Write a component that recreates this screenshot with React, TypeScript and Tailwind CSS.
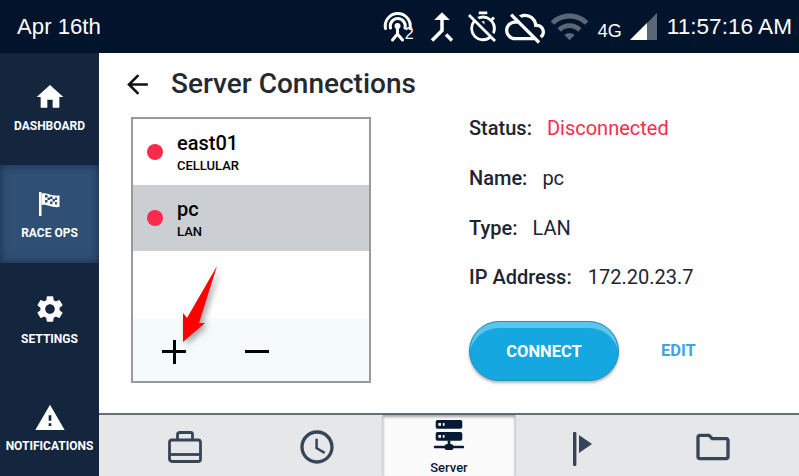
import React from "react";
import { MdHome, MdSettings, MdWarning, MdArrowBack, MdCallMerge, MdOutlineTimerOff, MdOutlineCloudOff, MdWifi, MdOutlineFolder, MdAccessTime } from "react-icons/md";

function Antenna() {
  return (
    <svg width="32" height="32" viewBox="0 0 32 32" fill="none" stroke="#fff" strokeWidth="3" strokeLinecap="round">
      <path d="M3.5 17.5 A12.5 12.5 0 1 1 28 17.5" />
      <path d="M8.5 17 A7.5 7.5 0 1 1 23 17" />
      <circle cx="15.5" cy="15" r="3" fill="#fff" stroke="none" />
      <path d="M15.5 16v7M15.5 23l-5 6M15.5 23l5 6" />
    </svg>
  );
}

function Signal() {
  return (
    <svg width="28" height="28" viewBox="0 0 28 28">
      <path d="M0 28 L27 1 V28 Z" fill="#5a6777" />
      <path d="M0 28 L17 11 V28 Z" fill="#fff" />
    </svg>
  );
}

function RaceFlag() {
  return (
    <svg width="21" height="24" viewBox="0 0 21 24">
      <rect x="0" y="0" width="2.5" height="24" fill="#fff" />
      <path d="M2.5 1.5 C8 0 12 4.5 20.5 3.5 V15 C12 16 8 11.5 2.5 13 Z" fill="#fff" />
      <g fill="#2f4f75">
        <rect x="6" y="3" width="2.5" height="2.5" />
        <rect x="11" y="4.5" width="2.5" height="2.5" />
        <rect x="8.5" y="5.5" width="2.5" height="2.5" />
        <rect x="13.5" y="7" width="2.5" height="2.5" />
        <rect x="6" y="8" width="2.5" height="2.5" />
        <rect x="11" y="9.5" width="2.5" height="2.5" />
        <rect x="16" y="5.5" width="2" height="2.5" />
        <rect x="16" y="10" width="2" height="2.5" />
      </g>
    </svg>
  );
}

function Briefcase() {
  return (
    <svg width="36" height="34" viewBox="0 0 36 34" fill="none" stroke="#374559" strokeWidth="2.8" strokeLinejoin="round">
      <rect x="2.5" y="10" width="31" height="21.5" rx="2.5" />
      <path d="M10.5 10V4.5A2 2 0 0 1 12.5 2.5H23.5A2 2 0 0 1 25.5 4.5V10" />
      <path d="M2.5 24.5H33.5" />
    </svg>
  );
}

function ServerIcon() {
  return (
    <svg width="36" height="35" viewBox="0 0 36 35">
      <rect x="3" y="0" width="30" height="10" rx="2" fill="#071a33" />
      <rect x="3" y="13.5" width="30" height="10" rx="2" fill="#071a33" />
      <rect x="6" y="3.5" width="3" height="3" fill="#fff" />
      <rect x="11" y="3.5" width="2" height="3" fill="#fff" />
      <rect x="6" y="17" width="3" height="3" fill="#fff" />
      <rect x="11" y="17" width="2" height="3" fill="#fff" />
      <rect x="16.5" y="23" width="3" height="5" fill="#071a33" />
      <rect x="1" y="29" width="34" height="3" rx="1" fill="#071a33" />
      <rect x="13" y="27" width="10" height="7" rx="3" fill="#071a33" />
    </svg>
  );
}

function FlagPlay() {
  return (
    <svg width="24" height="40" viewBox="0 0 24 40" fill="#374559">
      <rect x="4" y="5" width="3.4" height="34" rx="1" />
      <path d="M10 8 L23 17 L10 26 Z" />
    </svg>
  );
}

function RedArrow() {
  return (
    <svg
      className="absolute left-[78px] top-[210px] drop-shadow-[3px_3px_3px_rgba(0,0,0,0.35)]"
      width="50"
      height="90"
      viewBox="0 0 50 90"
    >
      <path d="M40 3 L6 79 L6 50 L10 55 Z M40 3 L22 60 L28 60 L6 79 L10 55 Z" fill="#fe0000" />
    </svg>
  );
}

const navItems = [
  { label: "DASHBOARD", icon: <MdHome size={32} />, cls: "h-[112px] pt-[28px]", gap: "mt-[5px]" },
  { label: "RACE OPS", icon: <RaceFlag />, cls: "h-[98px] pt-[23px] bg-[#2f4f75] shadow-[inset_0_0_8px_rgba(8,20,40,0.6)]", gap: "mt-[5px]" },
  { label: "SETTINGS", icon: <MdSettings size={32} />, cls: "h-[107px] pt-[30px]", gap: "mt-[6px]" },
  { label: "NOTIFICATIONS", icon: <MdWarning size={32} />, cls: "h-[106px] pt-[32px]", gap: "mt-[4px]" },
];

function Detail({ label, value, valueCls = "", gap }: { label: string; value: string; valueCls?: string; gap: string }) {
  return (
    <div className={`flex items-center h-[25px] text-[20px] text-[#1d2530] ${gap}`}>
      <span className="font-medium">{label}</span>
      <span className={valueCls}>{value}</span>
    </div>
  );
}

export default function App() {
  return (
    <div className="w-[799px] h-[476px] overflow-hidden flex flex-col bg-white font-['Roboto',sans-serif]">
      <header className="h-[53px] shrink-0 bg-[#02142c] text-white flex items-center pl-[17px] pr-[7px] font-['Liberation_Sans',sans-serif]">
        <span className="text-[22.2px]">Apr 16th</span>
        <div className="ml-auto flex items-center">
          <div className="relative w-[32px] h-[32px]">
            <Antenna />
            <span className="absolute left-[23px] top-[14px] text-[16px] leading-[18px]">2</span>
          </div>
          <MdCallMerge size={42} className="ml-[7px]" />
          <MdOutlineTimerOff size={34} className="ml-[3px]" />
          <MdOutlineCloudOff size={40} className="ml-[5px]" />
          <MdWifi size={41} className="ml-[4px] text-[#5a6777]" />
          <span className="ml-[8px] mt-[10px] text-[18px]">4G</span>
          <div className="ml-[8px] mt-[-2px] flex"><Signal /></div>
          <span className="ml-[9px] text-[22.6px]">11:57:16 AM</span>
        </div>
      </header>
      <div className="flex flex-1 min-h-0">
        <nav className="w-[99px] shrink-0 bg-[#14263d] text-white flex flex-col">
          {navItems.map((n) => (
            <div key={n.label} className={`flex flex-col items-center ${n.cls}`}>
              <div className="h-[32px] flex items-center justify-center">{n.icon}</div>
              <span className={`${n.gap} text-[12px] leading-[16px] font-bold whitespace-nowrap`}>{n.label}</span>
            </div>
          ))}
        </nav>
        <main className="relative flex-1 flex flex-col min-w-0">
          <div className="h-[64px] shrink-0 flex items-center pl-[23px] pb-[2px]">
            <MdArrowBack size={31} className="text-[#111]" />
            <h1 className="ml-[18px] text-[28px] font-medium text-[#25292f]">Server Connections</h1>
          </div>
          <div className="flex pl-[32px]">
            <div className="w-[240px] h-[266px] border-2 border-[#9a9a9a] flex flex-col">
              <div className="h-[66px] flex items-center pl-[14px]">
                <span className="w-[16px] h-[16px] rounded-full bg-[#fb2b4b]" />
                <div className="ml-[14px] flex flex-col text-black">
                  <span className="text-[20px] leading-[26px] font-medium">east01</span>
                  <span className="mt-[2px] text-[13px] leading-[16px] font-medium">CELLULAR</span>
                </div>
              </div>
              <div className="h-[66px] flex items-center pl-[14px] bg-[#cbced2]">
                <span className="w-[16px] h-[16px] rounded-full bg-[#fb2b4b]" />
                <div className="ml-[14px] flex flex-col text-black">
                  <span className="text-[20px] leading-[26px] font-medium">pc</span>
                  <span className="mt-[2px] text-[13px] leading-[16px] font-medium">LAN</span>
                </div>
              </div>
              <div className="flex-1" />
              <div className="h-[62px] bg-[#f5fafd] relative">
                <span className="absolute left-[29px] top-[31px] w-[24px] h-[3px] bg-black" />
                <span className="absolute left-[40px] top-[21px] w-[3px] h-[24px] bg-black" />
                <span className="absolute left-[112px] top-[31px] w-[24px] h-[3px] bg-black" />
              </div>
            </div>
            <div className="ml-[98px] -mt-[2px] flex flex-col">
              <div className="flex flex-col gap-[25px]">
                <Detail label="Status:" value="Disconnected" valueCls="text-[#fb2b4b]" gap="gap-[15px]" />
                <Detail label="Name:" value="pc" gap="gap-[15px]" />
                <Detail label="Type:" value="LAN" gap="gap-[15px]" />
                <Detail label="IP Address:" value="172.20.23.7" gap="gap-[16px] -mt-[1px]" />
              </div>
              <div className="flex items-center mt-[32px]">
                <button className="w-[150px] h-[60px] pt-[2px] rounded-full bg-[#14a7e0] border border-[#2390bf] shadow-[inset_0_7px_0_-1px_#5fc4ec,0_2px_3px_rgba(0,0,0,0.3)] text-white font-bold text-[16.5px]">
                  CONNECT
                </button>
                <span className="ml-[42px] text-[#3fa5de] font-bold text-[16.5px]">EDIT</span>
              </div>
            </div>
          </div>
          <RedArrow />
          <div className="mt-auto h-[63px] shrink-0 bg-[#e6e7e9] border-t-2 border-[#64707e] flex px-[20px]">
            <div className="w-[132px] flex items-center justify-center pt-[3px]"><Briefcase /></div>
            <div className="w-[132px] flex items-center justify-center pt-[3px]"><MdAccessTime size={40} className="text-[#374559]" /></div>
            <div className="w-[132px] bg-[#fbfbfb] flex flex-col items-center shadow-[inset_0_2px_3px_rgba(0,0,0,0.35),0_0_2px_rgba(0,0,0,0.3)] pt-[5px]">
              <ServerIcon />
              <span className="mt-[9px] text-[13px] leading-[16px] font-medium text-[#071a33]">Server</span>
            </div>
            <div className="w-[132px] flex items-center justify-center pt-[3px]"><FlagPlay /></div>
            <div className="w-[132px] flex items-center justify-center pt-[3px]"><MdOutlineFolder size={40} className="text-[#374559]" /></div>
          </div>
        </main>
      </div>
    </div>
  );
}
